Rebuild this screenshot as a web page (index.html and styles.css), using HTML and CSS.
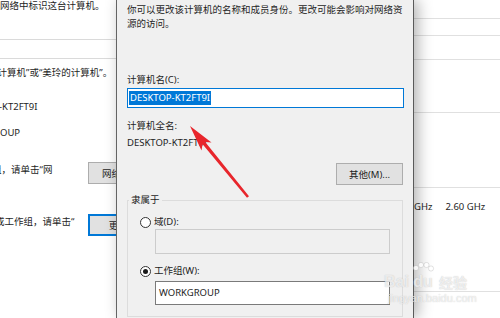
FILE: index.html
```html
<!DOCTYPE html>
<html lang="zh-CN">
<head>
  <meta charset="UTF-8" />
  <title>计算机名/域更改</title>
  <link rel="stylesheet" href="styles.css">
</head>
<body>
  <div class="screen">
    <div class="pane-left">
      <div class="line l1">在网络中标识这台计算机。</div>
      <div class="sep s1"></div>
      <div class="sep s2"></div>
      <div class="line l2">房计算机”或“美玲的计算机”。</div>
      <div class="line l3">-KT2FT9I</div>
      <div class="line l4">OUP</div>
      <div class="row r5">
        <div class="row-text"><span class="cut c5">组，请单击“网</span></div>
        <button class="btn wide">网络 ID(N)...</button>
      </div>
      <div class="row r6">
        <div class="row-text"><span class="cut c6">或工作组，请单击“</span></div>
        <button class="btn wide default">更改(C)...</button>
      </div>
    </div>

    <div class="dialog">
      <p class="intro">你可以更改该计算机的名称和成员身份。更改可能会影响对网络资<br>源的访问。</p>
      <div class="label name-label">计算机名(C):</div>
      <div class="field focused"><span class="selected">DESKTOP-KT2FT9I</span></div>
      <div class="label full-label">计算机全名:</div>
      <div class="value">DESKTOP-KT2FT9I</div>
      <div class="more-row"><button class="btn more">其他(M)...</button></div>
      <fieldset class="member">
        <legend>隶属于</legend>
        <div class="radio-row first"><span class="radio"></span><span>域(D):</span></div>
        <div class="field disabled"></div>
        <div class="radio-row second"><span class="radio checked"></span><span>工作组(W):</span></div>
        <div class="field group">WORKGROUP</div>
      </fieldset>
    </div>

    <div class="pane-right">
      <div class="band b1"></div>
      <div class="band b2"></div>
      <div class="band b3"></div>
      <div class="band b4"></div>
      <div class="band b5"></div>
      <div class="speed"><span>GHz</span><span>2.60 GHz</span></div>
      <div class="band b6"></div>
    </div>
  </div>

  <svg class="arrow" width="500" height="318" viewBox="0 0 500 318">
    <polygon points="190,126 201.5,150.5 202.6,144.2 247,197.8 249,196.2 205.2,142 211.5,142.5" fill="#e8262c" />
  </svg>

  <div class="watermark">
    <div class="wm-top">
      <span class="wm-bai">Bai</span>
      <span class="wm-du">
        <svg class="paw" width="24" height="14" viewBox="0 0 24 14">
          <circle cx="5" cy="6" r="2.6" />
          <circle cx="10" cy="3" r="2.6" />
          <circle cx="15.5" cy="3" r="2.6" />
          <circle cx="20" cy="6.5" r="2.6" />
        </svg>
        du
      </span>
      <span class="wm-jy">经验</span>
    </div>
    <div class="wm-url">jingyan.baidu.com</div>
  </div>
</body>
</html>
```

FILE: styles.css
```css
* { box-sizing: border-box; }
body {
  margin: 0; width: 500px; height: 318px; overflow: hidden;
  position: relative; background: #fff; color: #1e1e1e;
  font-family: 'Noto Sans', 'Noto Sans CJK SC', sans-serif;
  font-size: 9.5px;
}
.screen { display: flex; height: 318px; }

/* window behind, left side */
.pane-left { width: 116px; flex: none; overflow: hidden; background: #fff; }
.line { white-space: nowrap; line-height: 14px; }
.l1 { margin: -1px 0 0 -9.5px; }
.sep { height: 1px; background: #dadada; }
.s1 { margin-top: 26px; }
.s2 { margin-top: 18px; }
.l2 { margin: 7px 0 0 -12px; }
.l3 { margin: 20px 0 0 -1px; }
.l4 { margin-top: 12px; }
.row { display: flex; align-items: flex-start; height: 22px; }
.r5 { margin-top: 22px; }
.r6 { margin-top: 30px; }
.row-text { width: 88px; flex: none; padding-top: 1px; line-height: 14px; white-space: nowrap; }
.cut { display: inline-block; }
.c5 { margin-left: -8px; }
.c6 { margin-left: -5px; }

.btn {
  font: inherit; color: #1e1e1e;
  background: #e1e1e1; border: 1px solid #adadad;
  height: 22px; padding: 0; flex: none;
}
.btn.wide { width: 80px; text-align: center; }
.btn.default { border-color: #0078d7; box-shadow: inset 0 0 0 1px #0078d7; }

/* the dialog */
.dialog {
  width: 298px; flex: none; background: #f0f0f0;
  border-left: 1px solid #646464; border-right: 1px solid #5a5a5a;
  padding: 3px 9px 0 10px;
  position: relative; z-index: 1;
  box-shadow: 4px 0 14px rgba(0,0,0,0.3);
}
.intro { margin: 0; line-height: 14px; white-space: nowrap; }
.label, .value { line-height: 14px; }
.name-label { margin-top: 42px; }
.field {
  height: 20px; margin-top: 1px;
  background: #fff; border: 1px solid #7a7a7a;
  padding: 1px 1px; line-height: 16px; white-space: nowrap;
}
.field.focused { border-color: #0078d7; }
.selected { display: inline-block; background: #0078d7; color: #fff; line-height: 14px; padding: 0 1px; margin-top: 1px; }
.full-label { margin-top: 11px; }
.value { margin-top: 3px; }
.more-row { display: flex; justify-content: flex-end; margin-top: 13px; padding-right: 1px; }
.btn.more { width: 67px; }

.member {
  margin: 8px 1px 0 0; padding: 0 12px 11px 12px;
  border: 1px solid #dcdcdc; min-width: 0;
}
.member legend { margin-left: -11px; padding: 0 2px; line-height: 14px; }
.radio-row { display: flex; align-items: center; gap: 3px; line-height: 14px; }
.radio-row.first { margin-top: 8px; }
.radio-row.second { margin-top: 10px; }
.radio {
  width: 11px; height: 11px; border-radius: 50%;
  border: 1px solid #333; background: #fff;
  display: flex; align-items: center; justify-content: center;
}
.radio.checked::after {
  content: ''; width: 5px; height: 5px; border-radius: 50%; background: #1a1a1a;
}
.field.disabled {
  margin: 0 0 0 15px; height: 25px;
  background: #f0f0f0; border-color: #cccccc;
}
.field.group {
  margin: 3px 0 0 15px; height: 24px;
  border-color: #7a7a7a; padding: 4px 3px; line-height: 14px;
}

/* window behind, right side */
.pane-right { flex: 1; background: #fff; overflow: hidden; }
.band { border-bottom: 1px solid #e0e0e0; }
.b1 { height: 19px; }
.b2 { height: 17px; }
.b3 { height: 24px; }
.b4 { height: 53px; }
.b5 { height: 75px; }
.b6 { height: 78px; }
.speed { display: flex; gap: 13px; margin-top: 12px; line-height: 14px; white-space: nowrap; }

/* overlays */
.arrow { position: absolute; left: 0; top: 0; pointer-events: none; z-index: 5; }
.watermark {
  position: absolute; left: 384px; top: 262px; z-index: 4;
  color: rgba(255,255,255,0.7); pointer-events: none;
  text-shadow: 0 0 1px rgba(120,120,120,0.45);
}
.wm-top { display: flex; align-items: flex-end; font-family: 'Liberation Sans', sans-serif; font-weight: bold; font-size: 16px; line-height: 16px; }
.wm-du { position: relative; display: inline-flex; flex-direction: column; align-items: center; margin: 0 2px; }
.paw { fill: rgba(255,255,255,0.8); stroke: rgba(150,150,150,0.45); stroke-width: 0.6; margin-bottom: -2px; }
.wm-jy { font-family: 'Noto Sans CJK SC', sans-serif; font-size: 14px; margin-left: 2px; }
.wm-url { font-family: 'Liberation Sans', sans-serif; font-size: 11px; margin: 2px 0 0 4px; }
```
